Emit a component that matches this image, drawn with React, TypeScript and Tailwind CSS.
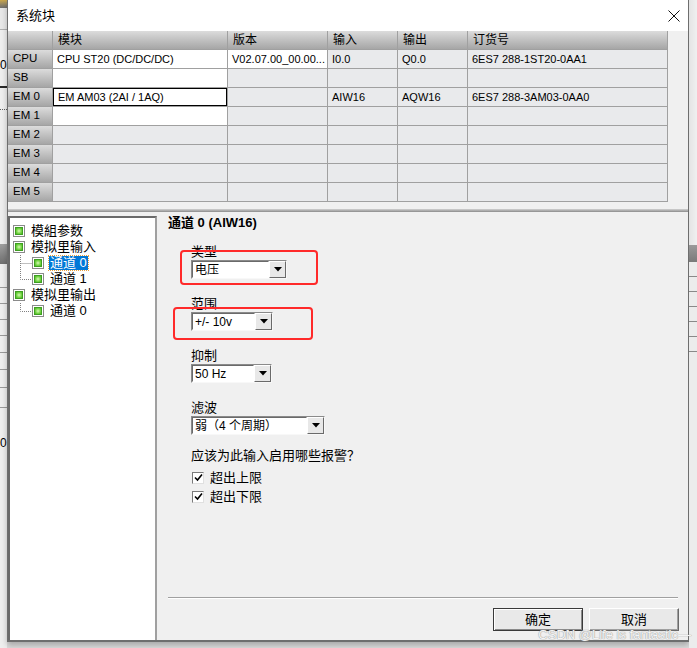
import React from 'react';

type Row = {
  head: string;
  mod?: string;
  ver?: string;
  inp?: string;
  out?: string;
  ord?: string;
  modWhite?: boolean;
  verWhite?: boolean;
  selected?: boolean;
};

const rows: Row[] = [
  {
    head: 'CPU',
    mod: 'CPU ST20 (DC/DC/DC)',
    ver: 'V02.07.00_00.00...',
    inp: 'I0.0',
    out: 'Q0.0',
    ord: '6ES7 288-1ST20-0AA1',
    modWhite: true,
    verWhite: true,
  },
  { head: 'SB', modWhite: true },
  {
    head: 'EM 0',
    mod: 'EM AM03 (2AI / 1AQ)',
    inp: 'AIW16',
    out: 'AQW16',
    ord: '6ES7 288-3AM03-0AA0',
    modWhite: true,
    selected: true,
  },
  { head: 'EM 1', modWhite: true },
  { head: 'EM 2' },
  { head: 'EM 3' },
  { head: 'EM 4' },
  { head: 'EM 5' },
];

const headCell =
  'h-[19px] flex items-center pl-[5px] border-r border-b border-[#a0a0a0] bg-linear-to-b from-[#dcdcdc] to-[#a6a6a6] overflow-hidden whitespace-nowrap';

function Cell({ text, white, selected }: { text?: string; white?: boolean; selected?: boolean }) {
  return (
    <div
      className={`h-[19px] flex items-center overflow-hidden border-r border-b border-[#a0a0a0] ${
        white ? 'bg-white' : 'bg-[#e9eaec]'
      }`}
    >
      <div
        className={`flex-1 h-full flex items-center pl-[4px] pr-[1px] min-w-0 text-[11px] whitespace-nowrap ${
          selected ? 'border border-black' : ''
        }`}
      >
        {text}
      </div>
    </div>
  );
}

function TreeIcon() {
  return (
    <span className="w-[12px] h-[12px] border border-[#8a8a8a] bg-white p-[1px] flex shrink-0">
      <span className="flex-1 border border-[#3f9f22] bg-[radial-gradient(circle,#d8f8b8_0%,#7ad84a_55%,#45b020_100%)]" />
    </span>
  );
}

function Elbow({ last }: { last?: boolean }) {
  return (
    <svg width="12" height="16" className="shrink-0">
      <path
        d={last ? 'M0.5 0 V8.5 H12' : 'M0.5 0 V16 M0.5 8.5 H12'}
        stroke="#808080"
        strokeDasharray="1 1"
        fill="none"
      />
    </svg>
  );
}

function TreeItem({ label }: { label: string }) {
  return (
    <div className="h-[16px] flex items-center pl-[3px] gap-[6px]">
      <TreeIcon />
      <span className="leading-[14px] text-[13px]">{label}</span>
    </div>
  );
}

function TreeChild({ label, last, selected }: { label: string; last?: boolean; selected?: boolean }) {
  return (
    <div className="h-[16px] flex items-center pl-[10px]">
      <Elbow last={last} />
      <TreeIcon />
      <span
        className={`ml-[5px] px-[1px] leading-[14px] text-[13px] ${
          selected ? 'bg-[#0078d7] text-white outline outline-dotted outline-[#e8a040]' : ''
        }`}
      >
        {label}
      </span>
    </div>
  );
}

function Combo({ width, value }: { width: number; value: string }) {
  return (
    <div
      className="h-[19px] flex bg-white border border-t-[#8a8a8a] border-l-[#8a8a8a] border-b-[#f8f8f8] border-r-[#f8f8f8]"
      style={{ width }}
    >
      <div className="flex-1 flex items-center pl-[2px] border border-t-[#6a6a6a] border-l-[#6a6a6a] border-b-white border-r-white">
        {value}
      </div>
      <div className="w-[17px] flex items-center justify-center bg-[#e8e8e8] border border-t-white border-l-white border-b-[#6a6a6a] border-r-[#6a6a6a]">
        <svg width="8" height="5">
          <path d="M0 0 H8 L4 4.5 Z" fill="#000" />
        </svg>
      </div>
    </div>
  );
}

function Field({ label, children }: { label: string; children: React.ReactNode }) {
  return (
    <div className="flex flex-col">
      <div className="h-[13px] leading-[13px] mb-[2px] text-[13px]">{label}</div>
      {children}
    </div>
  );
}

function Check({ label }: { label: string }) {
  return (
    <div className="h-[19px] flex items-center gap-[6px] pl-[1px]">
      <span className="w-[12px] h-[12px] flex items-center justify-center bg-white border border-t-[#7a7a7a] border-l-[#7a7a7a] border-b-[#e0e0e0] border-r-[#e0e0e0]">
        <svg width="9" height="9">
          <path d="M1 4.5 L3.5 7 L8 1.5" stroke="#000" strokeWidth="1.6" fill="none" />
        </svg>
      </span>
      <span className="text-[13px]">{label}</span>
    </div>
  );
}

function Button({ label, primary }: { label: string; primary?: boolean }) {
  return (
    <button
      className={`w-[90px] h-[23px] flex items-center justify-center bg-[#e9e9e9] text-[13px] border ${
        primary
          ? 'border-[#3a3a3a] shadow-[inset_1px_1px_0_#ffffff,inset_-1px_-1px_0_#8a8a8a]'
          : 'border-t-white border-l-white border-b-[#6a6a6a] border-r-[#6a6a6a] shadow-[inset_-1px_-1px_0_#a0a0a0]'
      }`}
    >
      {label}
    </button>
  );
}

function LeftStrip() {
  return (
    <div className="w-[7px] h-full flex flex-col bg-[#efefef] shrink-0">
      <div className="h-[8px] bg-linear-to-b from-[#c9a64a] to-[#6e6e6e]" />
      <div className="h-[22px] bg-[#e8e8e8] border-b border-[#b0b0b0]" />
      <div className="h-[56px] text-[12px] leading-[70px] overflow-hidden">0</div>
      <div className="h-[2px] bg-[#2a2a2a]" />
      <div className="h-[22px] border-b border-dotted border-[#606060]" />
      <div className="h-[134px]" />
      <div className="h-[20px] bg-linear-to-b from-[#a0a0a0] to-[#707070]" />
      <div className="h-[24px] border-b border-[#9a9a9a]" />
      <div className="h-[16px] border-b border-[#9a9a9a]" />
      <div className="h-[16px] border-b border-[#9a9a9a]" />
      <div className="h-[16px] border-b border-[#9a9a9a]" />
      <div className="h-[17px] border-b border-[#9a9a9a]" />
      <div className="h-[17px] border-b border-[#9a9a9a]" />
      <div className="h-[18px] border-b border-[#9a9a9a]" />
      <div className="h-[20px] border-b border-[#9a9a9a]" />
      <div className="h-[40px] text-[12px] leading-[70px] overflow-hidden">0</div>
      <div className="flex-1" />
    </div>
  );
}

function RightStrip() {
  return (
    <div className="w-[8px] h-full flex flex-col bg-[#ececec] shrink-0">
      <div className="h-[245px] bg-linear-to-r from-[#e4e4e4] to-[#f0f0f0]" />
      <div className="h-[17px] bg-linear-to-b from-[#9a9a9a] to-[#7a7a7a]" />
      <div className="h-[15px] border-b border-[#8a8a8a]" />
      <div className="h-[15px] border-b border-[#8a8a8a]" />
      <div className="h-[15px] border-b border-[#8a8a8a]" />
      <div className="h-[15px] border-b border-[#8a8a8a]" />
      <div className="h-[15px] border-b border-[#8a8a8a]" />
      <div className="h-[15px] border-b border-[#8a8a8a]" />
      <div className="flex-1" />
    </div>
  );
}

export default function App() {
  return (
    <div className="w-[697px] h-[648px] flex bg-[#dcdcdc] overflow-hidden relative text-[12px] text-black font-['Liberation_Sans','Noto_Sans_CJK_SC',sans-serif]">
      <LeftStrip />

      <div className="w-[682px] h-[642px] flex flex-col bg-[#f0f0f0] border-l border-r border-b-2 border-[#6e6e6e] shadow-[0_3px_6px_rgba(0,0,0,0.25)] shrink-0">
        {/* title bar */}
        <div className="h-[31px] bg-white flex items-center justify-between pl-[8px] pr-[8px]">
          <span className="text-[13px]">系统块</span>
          <svg width="12" height="12">
            <path d="M0.5 0.5 L11.5 11.5 M11.5 0.5 L0.5 11.5" stroke="#111" strokeWidth="1" />
          </svg>
        </div>

        {/* module table */}
        <div className="flex">
          <div className="grid grid-cols-[45px_175px_100px_70px_70px_200px] w-[660px]">
            <div className={headCell} />
            <div className={headCell}>模块</div>
            <div className={headCell}>版本</div>
            <div className={headCell}>输入</div>
            <div className={headCell}>输出</div>
            <div className={headCell}>订货号</div>
            {rows.map((r) => (
              <React.Fragment key={r.head}>
                <div className={`${headCell} text-[11.5px]`}>{r.head}</div>
                <Cell text={r.mod} white={r.modWhite} selected={r.selected} />
                <Cell text={r.ver} white={r.verWhite} />
                <Cell text={r.inp} />
                <Cell text={r.out} />
                <Cell text={r.ord} />
              </React.Fragment>
            ))}
          </div>
        </div>

        <div className="h-[7px]" />
        <div className="h-[3px] bg-linear-to-b from-[#d2d2d2] to-[#8c8c8c]" />

        {/* lower area */}
        <div className="flex-1 flex min-h-0">
          <div className="w-[149px] mt-[4px] bg-white border-l-2 border-t-2 border-[#6a6a6a] border-r-2 border-r-[#a0a0a0] pt-[5px] flex flex-col shrink-0">
            <TreeItem label="模組参数" />
            <TreeItem label="模拟里输入" />
            <TreeChild label="通道 0" selected />
            <TreeChild label="通道 1" last />
            <TreeItem label="模拟里输出" />
            <TreeChild label="通道 0" last />
          </div>

          <div className="flex-1 flex flex-col pt-[4px] pb-[9px]">
            <div className="pl-[11px] h-[14px] leading-[14px] font-bold text-[13px]">通道 0 (AIW16)</div>

            <div className="pl-[34px] mt-[15px] flex flex-col gap-[18px] relative">
              <div className="absolute left-[23px] top-[5px] w-[138px] h-[35px] border-2 border-[#ff2a2a] rounded-[4px]" />
              <div className="absolute left-[16px] top-[62px] w-[140px] h-[33px] border-2 border-[#ff2a2a] rounded-[4px]" />
              <Field label="类型">
                <Combo width={96} value="电压" />
              </Field>
              <Field label="范围">
                <Combo width={82} value="+/- 10v" />
              </Field>
              <Field label="抑制">
                <Combo width={81} value="50 Hz" />
              </Field>
              <Field label="滤波">
                <Combo width={134} value="弱（4 个周期）" />
              </Field>
            </div>

            <div className="pl-[34px] mt-[14px] flex flex-col">
              <div className="h-[14px] leading-[14px] text-[13px] mb-[5px]">应该为此输入启用哪些报警？</div>
              <Check label="超出上限" />
              <Check label="超出下限" />
            </div>

            <div className="mt-auto ml-[11px] mr-[10px] h-[2px] border-t border-[#a0a0a0] border-b border-b-white" />
            <div className="mt-[9px] flex justify-end gap-[6px] pr-[9px]">
              <Button label="确定" primary />
              <Button label="取消" />
            </div>
          </div>
        </div>
      </div>

      <RightStrip />

      <div className="absolute right-[6px] bottom-[7px] text-[13px] leading-[13px] text-[#f4f4f4] [text-shadow:0_0_1px_#9a9a9a,0_0_1px_#9a9a9a]">
        CSDN @Life is fantastic—
      </div>
    </div>
  );
}
